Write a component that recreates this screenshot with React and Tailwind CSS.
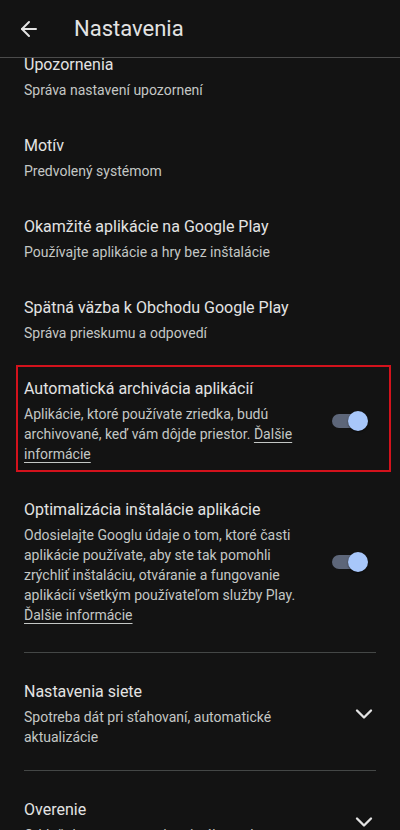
import { ArrowLeft, ChevronDown } from 'lucide-react'

const simpleItems = [
  { title: 'Upozornenia', sub: 'Správa nastavení upozornení' },
  { title: 'Motív', sub: 'Predvolený systémom' },
  { title: 'Okamžité aplikácie na Google Play', sub: 'Používajte aplikácie a hry bez inštalácie' },
  { title: 'Spätná väzba k Obchodu Google Play', sub: 'Správa prieskumu a odpovedí' },
]

const Toggle = () => (
  <div className="relative w-[36px] h-[20px] shrink-0 flex items-center">
    <div className="w-[34px] h-[14px] rounded-full bg-[#5d6679]"></div>
    <div className="absolute right-0 top-0 w-[20px] h-[20px] rounded-full bg-[#a8c7fa] shadow-[0_1px_2px_rgba(0,0,0,0.5)]"></div>
  </div>
)

const Link = ({ children }) => (
  <span className="underline underline-offset-[3px] decoration-[1px]">{children}</span>
)

const App = () => {
  return (
    <div
      className="w-[400px] h-[830px] bg-[#131313] text-[#e3e3e3] flex flex-col overflow-hidden"
      style={{ fontFamily: 'Roboto, "Noto Sans", sans-serif' }}
    >
      {/* Top bar */}
      <header className="h-[58px] shrink-0 flex items-center border-b border-[#4b4b4b] relative z-10 bg-[#131313]">
        <ArrowLeft className="ml-[17px] w-[24px] h-[24px] text-[#e3e3e3]" strokeWidth={2} />
        <h1 className="ml-[33px] text-[22px] leading-[28px] font-normal">Nastavenia</h1>
      </header>

      <main className="flex-1 overflow-hidden">
        <div className="-mt-[22px]">
          {simpleItems.map((item) => (
            <div key={item.title} className="px-[24px] py-[17px]">
              <div className="text-[16px] leading-[24px]">{item.title}</div>
              <div className="mt-[3px] text-[14px] leading-[20px] text-[#c4c7c5]">{item.sub}</div>
            </div>
          ))}

          {/* Auto archive (highlighted) */}
          <div className="relative pl-[24px] pr-[32px] py-[17px] flex items-center gap-[20px]">
            <div className="flex-1">
              <div className="text-[16px] leading-[24px]">Automatická archivácia aplikácií</div>
              <div className="mt-[3px] text-[14px] leading-[20px] text-[#c4c7c5]">
                Aplikácie, ktoré používate zriedka, budú archivované, keď vám dôjde priestor.{' '}
                <Link>Ďalšie informácie</Link>
              </div>
            </div>
            <Toggle />
            <div className="absolute left-[16px] right-[9px] top-[5px] h-[107px] border-2 border-[#d3121c] pointer-events-none"></div>
          </div>

          {/* Install optimisation */}
          <div className="pl-[24px] pr-[32px] py-[17px] flex items-center gap-[20px]">
            <div className="flex-1">
              <div className="text-[16px] leading-[24px]">Optimalizácia inštalácie aplikácie</div>
              <div className="mt-[3px] text-[14px] leading-[20px] text-[#c4c7c5]">
                Odosielajte Googlu údaje o tom, ktoré časti aplikácie používate, aby ste tak pomohli zrýchliť inštaláciu, otváranie a fungovanie aplikácií všetkým používateľom služby Play.{' '}
                <Link>Ďalšie informácie</Link>
              </div>
            </div>
            <Toggle />
          </div>

          <div className="mx-[24px] mt-[10px] border-t border-[#444746]"></div>

          {/* Network */}
          <div className="pl-[24px] pr-[22px] pt-[27px] pb-[23px] flex items-center gap-[16px]">
            <div className="flex-1 pr-[30px]">
              <div className="text-[16px] leading-[24px]">Nastavenia siete</div>
              <div className="mt-[3px] text-[14px] leading-[20px] text-[#c4c7c5]">
                Spotreba dát pri sťahovaní, automatické aktualizácie
              </div>
            </div>
            <ChevronDown className="w-[28px] h-[28px] text-[#e3e3e3]" strokeWidth={2} />
          </div>

          <div className="mx-[24px] border-t border-[#444746]"></div>

          {/* Authentication */}
          <div className="pl-[24px] pr-[22px] pt-[27px] pb-[23px] flex items-center gap-[16px]">
            <div className="flex-1">
              <div className="text-[16px] leading-[24px]">Overenie</div>
              <div className="mt-[3px] text-[14px] leading-[20px] text-[#c4c7c5]">
                Odtlačok prstu, overenie pri nákupoch
              </div>
            </div>
            <ChevronDown className="w-[28px] h-[28px] text-[#e3e3e3]" strokeWidth={2} />
          </div>
        </div>
      </main>
    </div>
  )
}

export default App
